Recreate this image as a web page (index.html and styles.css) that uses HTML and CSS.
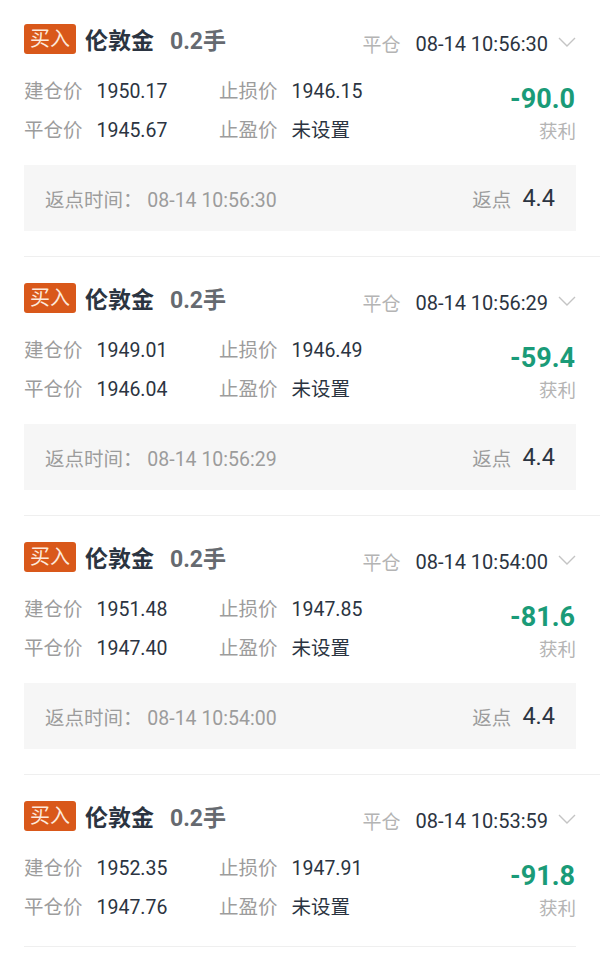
FILE: index.html
```html
<!DOCTYPE html>
<html lang="zh-CN">
<head>
    <meta charset="UTF-8">
    <title>持仓记录</title>
    <link rel="stylesheet" href="styles.css">
</head>
<body>
    <div class="list">
        <div class="card">
            <div class="head">
                <div class="title">
                    <span class="tag">买入</span>
                    <span class="name">伦敦金</span>
                    <span class="lots">0.2手</span>
                </div>
                <div class="meta">
                    <span class="kind">平仓</span>
                    <span class="time">08-14 10:56:30</span>
                    <svg class="arrow" width="18" height="10" viewBox="0 0 18 10"><path d="M1 1l8 8 8-8" fill="none" stroke="#c4c4c4" stroke-width="1.4"/></svg>
                </div>
            </div>
            <div class="body">
                <div class="grid">
                    <div class="cell"><span class="label">建仓价</span><span class="value">1950.17</span></div>
                    <div class="cell"><span class="label">止损价</span><span class="value">1946.15</span></div>
                    <div class="cell"><span class="label">平仓价</span><span class="value">1945.67</span></div>
                    <div class="cell"><span class="label">止盈价</span><span class="value">未设置</span></div>
                </div>
                <div class="profit">
                    <div class="amount">-90.0</div>
                    <div class="profit-label">获利</div>
                </div>
            </div>
            <div class="rebate">
                <div class="rebate-time">返点时间：&nbsp;08-14 10:56:30</div>
                <div class="rebate-num"><span class="label">返点</span><span class="rebate-value">4.4</span></div>
            </div>
        </div>

        <div class="card">
            <div class="head">
                <div class="title">
                    <span class="tag">买入</span>
                    <span class="name">伦敦金</span>
                    <span class="lots">0.2手</span>
                </div>
                <div class="meta">
                    <span class="kind">平仓</span>
                    <span class="time">08-14 10:56:29</span>
                    <svg class="arrow" width="18" height="10" viewBox="0 0 18 10"><path d="M1 1l8 8 8-8" fill="none" stroke="#c4c4c4" stroke-width="1.4"/></svg>
                </div>
            </div>
            <div class="body">
                <div class="grid">
                    <div class="cell"><span class="label">建仓价</span><span class="value">1949.01</span></div>
                    <div class="cell"><span class="label">止损价</span><span class="value">1946.49</span></div>
                    <div class="cell"><span class="label">平仓价</span><span class="value">1946.04</span></div>
                    <div class="cell"><span class="label">止盈价</span><span class="value">未设置</span></div>
                </div>
                <div class="profit">
                    <div class="amount">-59.4</div>
                    <div class="profit-label">获利</div>
                </div>
            </div>
            <div class="rebate">
                <div class="rebate-time">返点时间：&nbsp;08-14 10:56:29</div>
                <div class="rebate-num"><span class="label">返点</span><span class="rebate-value">4.4</span></div>
            </div>
        </div>

        <div class="card">
            <div class="head">
                <div class="title">
                    <span class="tag">买入</span>
                    <span class="name">伦敦金</span>
                    <span class="lots">0.2手</span>
                </div>
                <div class="meta">
                    <span class="kind">平仓</span>
                    <span class="time">08-14 10:54:00</span>
                    <svg class="arrow" width="18" height="10" viewBox="0 0 18 10"><path d="M1 1l8 8 8-8" fill="none" stroke="#c4c4c4" stroke-width="1.4"/></svg>
                </div>
            </div>
            <div class="body">
                <div class="grid">
                    <div class="cell"><span class="label">建仓价</span><span class="value">1951.48</span></div>
                    <div class="cell"><span class="label">止损价</span><span class="value">1947.85</span></div>
                    <div class="cell"><span class="label">平仓价</span><span class="value">1947.40</span></div>
                    <div class="cell"><span class="label">止盈价</span><span class="value">未设置</span></div>
                </div>
                <div class="profit">
                    <div class="amount">-81.6</div>
                    <div class="profit-label">获利</div>
                </div>
            </div>
            <div class="rebate">
                <div class="rebate-time">返点时间：&nbsp;08-14 10:54:00</div>
                <div class="rebate-num"><span class="label">返点</span><span class="rebate-value">4.4</span></div>
            </div>
        </div>

        <div class="card">
            <div class="head">
                <div class="title">
                    <span class="tag">买入</span>
                    <span class="name">伦敦金</span>
                    <span class="lots">0.2手</span>
                </div>
                <div class="meta">
                    <span class="kind">平仓</span>
                    <span class="time">08-14 10:53:59</span>
                    <svg class="arrow" width="18" height="10" viewBox="0 0 18 10"><path d="M1 1l8 8 8-8" fill="none" stroke="#c4c4c4" stroke-width="1.4"/></svg>
                </div>
            </div>
            <div class="body">
                <div class="grid">
                    <div class="cell"><span class="label">建仓价</span><span class="value">1952.35</span></div>
                    <div class="cell"><span class="label">止损价</span><span class="value">1947.91</span></div>
                    <div class="cell"><span class="label">平仓价</span><span class="value">1947.76</span></div>
                    <div class="cell"><span class="label">止盈价</span><span class="value">未设置</span></div>
                </div>
                <div class="profit">
                    <div class="amount">-91.8</div>
                    <div class="profit-label">获利</div>
                </div>
            </div>
        </div>
    </div>
</body>
</html>
```

FILE: styles.css
```css
body { margin: 0; background: #fff; font-family: Roboto, "Noto Sans CJK SC", sans-serif; color: #2b3441; }

.card { margin-left: 24px; padding: 26px 24px 25px 0; border-bottom: 1px solid #efefef; }
.card:first-child { padding-top: 24px; }
.card:last-child { margin-right: 24px; padding-right: 0; padding-bottom: 24px; }

.head { display: flex; justify-content: space-between; align-items: center; height: 30px; }
.title { display: flex; align-items: center; }
.tag { display: inline-block; width: 52px; height: 30px; line-height: 31px; text-align: center; background: #d9581a; color: #fde9da; border-radius: 3px; font-size: 20px; }
.name { margin-left: 9px; font-size: 23px; font-weight: bold; color: #2b3441; }
.lots { margin-left: 16px; font-size: 23px; font-weight: bold; color: #666a70; }
.meta { display: flex; align-items: center; padding-top: 9px; }
.kind { font-size: 19px; color: #b4b4b4; margin-right: 15px; }
.time { font-size: 20px; color: #2b3441; }
.arrow { margin-left: 10px; margin-top: -4px; }

.body { display: flex; justify-content: space-between; margin-top: 25px; }
.grid { display: grid; grid-template-columns: 195px auto; row-gap: 12px; }
.cell { line-height: 26px; white-space: nowrap; }
.label { font-size: 19.5px; color: #9c9c9c; margin-right: 14px; }
.value { font-size: 19.5px; color: #2b3441; }
.profit { align-self: flex-end; text-align: right; }
.amount { font-size: 27px; line-height: 36px; margin-bottom: 2px; margin-right: 1px; font-weight: bold; color: #1a9b78; }
.profit-label { font-size: 18.5px; line-height: 26px; color: #b4b4b4; }

.rebate { display: flex; justify-content: space-between; align-items: center; height: 66px; margin-top: 20px; padding: 0 21px; background: #f6f6f6; }
.rebate-time { font-size: 19.5px; color: #9c9c9c; }
.rebate-num { display: flex; align-items: center; }
.rebate-num .label { margin-right: 11px; }
.rebate-value { font-size: 23.5px; color: #2b3441; }
```
